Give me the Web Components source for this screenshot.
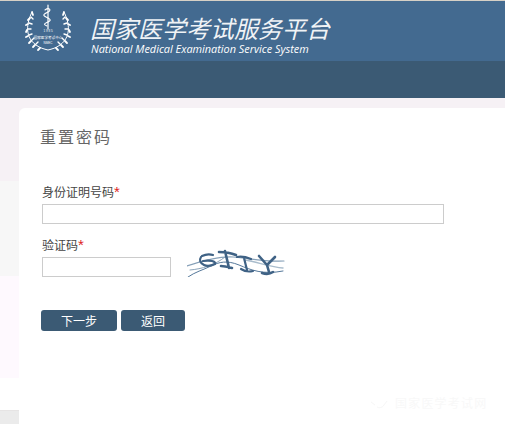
<!DOCTYPE html>
<html lang="zh"><head><meta charset="utf-8"><title>重置密码</title>
<style>
html,body{margin:0;padding:0;background:#fff}
body{font-family:"Noto Sans CJK SC","Liberation Sans",sans-serif;overflow:hidden}
</style></head><body>
<app-page>
  <site-header slot="header"></site-header>
  <reset-card>
    <form-field label="身份证明号码" width="402"></form-field>
    <form-field label="验证码" width="129"><captcha-image></captcha-image></form-field>
    <div slot="actions"><app-button w="76">下一步</app-button><app-button w="64">返回</app-button></div>
  </reset-card>
</app-page>
<script>
function def(name,html,setup){
  customElements.define(name,class extends HTMLElement{
    constructor(){super();this.attachShadow({mode:'open'}).innerHTML=html;}
    connectedCallback(){if(setup)setup(this);}
  });
}
def('app-page',`<style>
:host{display:block;width:505px;height:424px;overflow:hidden}
main{display:block;height:326px;box-sizing:border-box;padding:10px 0 0 19px;
background:linear-gradient(#f6f1f5 0 83px,#f7f7f7 83px 178px,#fef9fe 178px 280px,#fff 280px 312px,#e6e4e4 312px 313px,#ebebeb 313px)}
</style><slot name="header"></slot><main><slot></slot></main>`);
def('site-header',`<style>
:host{display:block;height:98px;background:#3b5a74}
.strip{height:1px;background:#d6d0c6}
.top{height:60px;background:#436a90;display:flex;align-items:flex-start;box-sizing:border-box;padding-left:24px;color:#fff}
svg{width:48px;height:50px;margin-top:3px;flex:none}
.txt{margin-left:18px;display:flex;flex-direction:column}
h1{margin:13px 0 0;font:400 24px/28px "Noto Sans CJK SC",sans-serif;font-style:italic;white-space:nowrap;opacity:.92}
p{margin:0 0 0 1px;font:italic 400 10.9px/13px "Open Sans","Liberation Sans",sans-serif;white-space:nowrap}
</style>
<div class="strip"></div>
<div class="top">
<svg viewBox="0 0 48 50" fill="none" stroke="#fff" stroke-linecap="round">
  <path d="M24 1V25" stroke-width="1.2"/>
  <path d="M21 6c4-3 7 0 3 2s-6 3-2 5 6 3 2 5-5 2-1 4" stroke-width="1.1"/>
  <path d="M8 8C2 20 1 33 12 41c4 3 8 4 12 5 4-1 8-2 12-5C47 33 46 20 40 8" stroke-width="1"/>
  <g stroke-width="1.8">
   <path d="M8 8l1 3M6 14l-2 2M4 20l-2 1M3 26l-1 2M4 32l-2 1M7 37l-2 2M11 41l-2 2M16 44l-2 2"/>
   <path d="M40 8l-1 3M42 14l2 2M44 20l2 1M45 26l1 2M44 32l2 1M41 37l2 2M37 41l2 2M32 44l2 2"/>
  </g>
  <g stroke-width="1.4">
   <path d="M7 13l2 2M5 19l3 1M4 25l3 0M5 31l3-1M8 36l2-2M12 40l2-2"/>
   <path d="M41 13l-2 2M43 19l-3 1M44 25l-3 0M43 31l-3-1M40 36l-2-2M36 40l-2-2"/>
  </g>
  <text x="24" y="28" font-size="3" fill="#fff" stroke="none" text-anchor="middle" font-family="Liberation Sans">1 9 8 5</text>
  <text x="24" y="35" font-size="3.6" fill="#fff" stroke="none" text-anchor="middle" font-family="Noto Sans CJK SC">国家医学考试中心</text>
  <text x="24" y="39.5" font-size="3" fill="#fff" stroke="none" text-anchor="middle" font-family="Liberation Sans">NMEC</text>
</svg>
<div class="txt"><h1>国家医学考试服务平台</h1><p>National Medical Examination Service System</p></div>
</div>`);
def('reset-card',`<style>
:host{display:block;position:relative;height:316px;background:#fff;border-radius:6px 0 0 0;box-sizing:border-box;padding:16px 0 0 21px;color:#444;font-family:"Noto Sans CJK SC",sans-serif}
h2{margin:0 0 35px;font:400 16px/24px "Noto Sans CJK SC",sans-serif;letter-spacing:2px;color:#666}
.fields{display:flex;flex-direction:column;gap:12px;padding-left:2px}
.actions{margin-top:33px;margin-left:1px}
.mark{position:absolute;left:351px;top:288px;display:flex;align-items:center;gap:7px;font-size:12px;line-height:14px;color:#f8f8f8;letter-spacing:1.2px;white-space:nowrap}
svg{flex:none}
</style>
<h2>重置密码</h2>
<div class="fields"><slot></slot></div>
<div class="actions"><slot name="actions"></slot></div>
<div class="mark"><svg width="18" height="12" viewBox="0 0 18 12" fill="none" stroke="#f6f6f6"><path d="M1 5l4 3M17 4l-3 4c-2 3-5 3-7 2"/></svg><span>国家医学考试网</span></div>`);
def('form-field',`<style>
:host{display:block}
label{display:block;font-size:12px;line-height:18px;color:#444;white-space:nowrap}
b{color:#d22;font-weight:400;font-family:"Liberation Sans",sans-serif;font-size:15px;line-height:14px}
.row{display:flex;align-items:flex-end;margin-top:3px}
.box{height:20px;box-sizing:border-box;border:1px solid #ccc;background:#fff;flex:none}
.extra{margin-left:16px;margin-top:-9px}
</style>
<label></label>
<div class="row"><div class="box"></div><div class="extra"><slot></slot></div></div>`,el=>{
  const s=el.shadowRoot;
  s.querySelector('label').innerHTML=el.getAttribute('label')+'<b>*</b>';
  s.querySelector('.box').style.width=el.getAttribute('width')+'px';
});
def('captcha-image',`<style>:host{display:block;width:98px;height:29px}svg{display:block}</style>
<svg width="98" height="29" viewBox="0 0 98 29" fill="none" stroke="#3f6285" stroke-linecap="round">
 <path d="M0 18C12 14 30 8 46 9s30 5 51 4" stroke="#86a0b8" stroke-width="1.2"/>
 <path d="M1 29C8 24 16 22 24 18S40 12 52 17s24 10 44 6" stroke="#55789a" stroke-width="1"/>
 <path d="M3 22C15 21 28 17 38 9" stroke="#8ba4ba" stroke-width="1"/>
 <path d="M58 12c12 2 26 7 38 8" stroke="#a9bccc" stroke-width="1.4"/>
 <path d="M15 8c4-2 8-2 11-1M14 9c-2 3-1 6 3 8s7 1 11-1c1-3-5-4-12-3" stroke-width="2.2"/>
 <path d="M32 4c5 0 12 1 17 3M38 3l4 17M34 18c3 0 7 1 11 2" stroke-width="2.6"/>
 <path d="M50 9c5-1 9 0 14 2M57 10l3 12M54 21c3 2 8 3 12 2" stroke-width="2.2"/>
 <path d="M72 8l8 9M88 9c-3 3-5 5-8 8l2 7M75 25c3 1 8 1 11-1" stroke-width="2.6"/>
</svg>`);
def('app-button',`<style>
:host{display:inline-block;height:21px;background:#3b5a74;color:#fff;border-radius:3px;font-size:12px;line-height:21px;text-align:center;vertical-align:top;margin-right:4px}
</style><slot></slot>`,el=>{el.style.width=el.getAttribute('w')+'px'});
</script>
</body></html>
